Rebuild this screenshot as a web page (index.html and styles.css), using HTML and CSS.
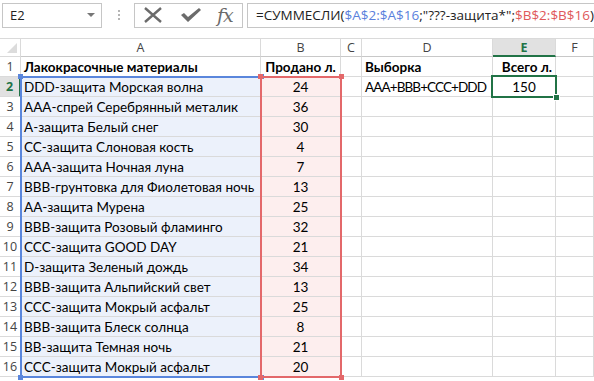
FILE: index.html
```html
<!DOCTYPE html>
<html lang="ru">
<head>
  <meta charset="UTF-8">
  <meta name="viewport" content="width=device-width, initial-scale=1.0">
  <title>СУММЕСЛИ</title>
  <link rel="stylesheet" href="styles.css">
</head>
<body>

<!-- Formula bar -->
<div class="toolbar">
  <div class="name-box">
    <span>E2</span>
    <span class="caret"></span>
  </div>
  <div class="grip"><i></i><i></i><i></i></div>
  <div class="fx-buttons">
    <svg class="btn-icon" width="20" height="16" viewBox="0 0 20 16">
      <path d="M2 1 L18 15 M18 1 L2 15" stroke="#6b6b6b" stroke-width="2.4" fill="none"/>
    </svg>
    <svg class="btn-icon" width="22" height="16" viewBox="0 0 22 16">
      <path d="M1 8 L4 6 L8 10 L19 1 L21 3 L8 15 Z" fill="#6b6b6b"/>
    </svg>
    <span class="fx">fx</span>
  </div>
  <div class="formula">=СУММЕСЛИ(<span class="ref-blue">$A$2:$A$16</span>;"???-защита*";<span class="ref-red">$B$2:$B$16</span>)</div>
</div>

<!-- Sheet -->
<div class="sheet">
  <div class="corner"><span class="tri"></span></div>
  <div class="col-head">A</div>
  <div class="col-head">B</div>
  <div class="col-head">C</div>
  <div class="col-head">D</div>
  <div class="col-head active">E</div>
  <div class="col-head">F</div>

  <div class="row-head">1</div>
  <div class="cell bold">Лакокрасочные материалы</div>
  <div class="cell bold center">Продано л.</div>
  <div class="cell"></div>
  <div class="cell bold">Выборка</div>
  <div class="cell bold right">Всего л.</div>
  <div class="cell"></div>

  <div class="row-head active">2</div>
  <div class="cell blue">DDD-защита Морская волна</div>
  <div class="cell red center">24</div>
  <div class="cell"></div>
  <div class="cell tight">AAA+BBB+CCC+DDD</div>
  <div class="cell center">150</div>
  <div class="cell"></div>

  <div class="row-head">3</div>
  <div class="cell blue">AAA-спрей Серебрянный металик</div>
  <div class="cell red center">36</div>
  <div class="cell"></div><div class="cell"></div><div class="cell"></div><div class="cell"></div>

  <div class="row-head">4</div>
  <div class="cell blue">A-защита Белый снег</div>
  <div class="cell red center">30</div>
  <div class="cell"></div><div class="cell"></div><div class="cell"></div><div class="cell"></div>

  <div class="row-head">5</div>
  <div class="cell blue">CC-защита Слоновая кость</div>
  <div class="cell red center">4</div>
  <div class="cell"></div><div class="cell"></div><div class="cell"></div><div class="cell"></div>

  <div class="row-head">6</div>
  <div class="cell blue">AAA-защита Ночная луна</div>
  <div class="cell red center">7</div>
  <div class="cell"></div><div class="cell"></div><div class="cell"></div><div class="cell"></div>

  <div class="row-head">7</div>
  <div class="cell blue">BBB-грунтовка для Фиолетовая ночь</div>
  <div class="cell red center">13</div>
  <div class="cell"></div><div class="cell"></div><div class="cell"></div><div class="cell"></div>

  <div class="row-head">8</div>
  <div class="cell blue">AA-защита Мурена</div>
  <div class="cell red center">25</div>
  <div class="cell"></div><div class="cell"></div><div class="cell"></div><div class="cell"></div>

  <div class="row-head">9</div>
  <div class="cell blue">BBB-защита Розовый фламинго</div>
  <div class="cell red center">32</div>
  <div class="cell"></div><div class="cell"></div><div class="cell"></div><div class="cell"></div>

  <div class="row-head">10</div>
  <div class="cell blue">CCC-защита GOOD DAY</div>
  <div class="cell red center">21</div>
  <div class="cell"></div><div class="cell"></div><div class="cell"></div><div class="cell"></div>

  <div class="row-head">11</div>
  <div class="cell blue">D-защита Зеленый дождь</div>
  <div class="cell red center">34</div>
  <div class="cell"></div><div class="cell"></div><div class="cell"></div><div class="cell"></div>

  <div class="row-head">12</div>
  <div class="cell blue">BBB-защита Альпийский свет</div>
  <div class="cell red center">13</div>
  <div class="cell"></div><div class="cell"></div><div class="cell"></div><div class="cell"></div>

  <div class="row-head">13</div>
  <div class="cell blue">CCC-защита Мокрый асфальт</div>
  <div class="cell red center">25</div>
  <div class="cell"></div><div class="cell"></div><div class="cell"></div><div class="cell"></div>

  <div class="row-head">14</div>
  <div class="cell blue">BBB-защита Блеск солнца</div>
  <div class="cell red center">8</div>
  <div class="cell"></div><div class="cell"></div><div class="cell"></div><div class="cell"></div>

  <div class="row-head">15</div>
  <div class="cell blue">BB-защита Темная ночь</div>
  <div class="cell red center">21</div>
  <div class="cell"></div><div class="cell"></div><div class="cell"></div><div class="cell"></div>

  <div class="row-head">16</div>
  <div class="cell blue">CCC-защита Мокрый асфальт</div>
  <div class="cell red center">20</div>
  <div class="cell"></div><div class="cell"></div><div class="cell"></div><div class="cell"></div>

  <!-- Range highlights drawn over the grid -->
  <div class="range range-blue">
    <span class="handle tl"></span><span class="handle tr"></span>
    <span class="handle bl"></span><span class="handle br"></span>
  </div>
  <div class="range range-red">
    <span class="handle tl"></span><span class="handle tr"></span>
    <span class="handle bl"></span><span class="handle br"></span>
  </div>
  <div class="active-cell"><span class="fill-handle"></span></div>
</div>

</body>
</html>
```

FILE: styles.css
```css
body {
  margin: 0;
  background-color: #fff;
  font-family: Lato, "Liberation Sans", sans-serif;
  overflow: hidden;
}

/* ---------- formula bar ---------- */

.toolbar {
  display: flex;
  align-items: center;
  height: 30px;
  padding: 0 0 0 2px;
  margin-bottom: 8px;
}

.name-box {
  display: flex;
  align-items: center;
  justify-content: space-between;
  width: 100px;
  height: 25px;
  box-sizing: border-box;
  border: 1px solid #c6c6c6;
  padding: 0 4px 0 7px;
  font-family: "Open Sans", "Liberation Sans", sans-serif;
  font-size: 13px;
  color: #222;
}

.caret {
  width: 0;
  height: 0;
  border-left: 4px solid transparent;
  border-right: 4px solid transparent;
  border-top: 4px solid #777;
  margin-right: 2px;
}

.grip {
  display: flex;
  flex-direction: column;
  gap: 2px;
  margin: 0 14px 0 16px;
}

.grip i {
  display: block;
  width: 2px;
  height: 2px;
  background-color: #b5b5b5;
}

.fx-buttons {
  display: flex;
  align-items: center;
  width: 109px;
  height: 25px;
  box-sizing: border-box;
  border: 1px solid #c6c6c6;
  padding: 0 0 0 8px;
}

.btn-icon {
  margin-right: 17px;
}

.fx {
  font-family: "DejaVu Serif", "Liberation Serif", serif;
  font-style: italic;
  font-size: 19px;
  color: #6b6b6b;
  margin-left: -2px;
  letter-spacing: -1px;
}

.formula {
  flex: 1;
  height: 25px;
  box-sizing: border-box;
  border: 1px solid #c6c6c6;
  border-right: none;
  margin-left: 4px;
  padding: 0 0 0 8px;
  font-family: "Open Sans", "Liberation Sans", sans-serif;
  font-size: 13.5px;
  line-height: 23px;
  color: #222;
  white-space: nowrap;
  overflow: hidden;
}

.ref-blue {
  color: #5a7fdc;
}

.ref-red {
  color: #e0585a;
}

/* ---------- sheet grid ---------- */

.sheet {
  position: relative;
  display: grid;
  grid-template-columns: 21px 240px 80px 21px 131px 63px 1fr;
  grid-template-rows: 19px repeat(16, 20px) 20px;
}

.corner,
.col-head,
.row-head,
.cell {
  box-sizing: border-box;
  border-right: 1px solid #dadada;
  border-bottom: 1px solid #dadada;
  white-space: nowrap;
  overflow: hidden;
}

.corner {
  position: relative;
  border-top: 1px solid #dadada;
}

.tri {
  position: absolute;
  right: 3px;
  bottom: 3px;
  width: 0;
  height: 0;
  border-left: 10px solid transparent;
  border-bottom: 10px solid #dcdcdc;
}

.col-head {
  border-top: 1px solid #dadada;
  border-bottom-color: #c8c8c8;
  font-family: "Open Sans", "Liberation Sans", sans-serif;
  font-size: 12.5px;
  color: #444;
  text-align: center;
  line-height: 17px;
}

.col-head.active {
  background-color: #e1e1e1;
  color: #217346;
  font-weight: bold;
  border-bottom: 2px solid #217346;
}

.row-head {
  font-family: "Open Sans", "Liberation Sans", sans-serif;
  font-size: 12.5px;
  color: #444;
  text-align: center;
  line-height: 19px;
}

.row-head.active {
  background-color: #e1e1e1;
  color: #217346;
  font-weight: bold;
  border-right: 2px solid #217346;
}

.cell {
  font-size: 13.5px;
  color: #000;
  padding: 0 3px;
  line-height: 20px;
}

.cell.tight {
  letter-spacing: -0.9px;
}

.bold {
  font-weight: bold;
}

.center {
  text-align: center;
}

.right {
  text-align: right;
}

.blue {
  background-color: #ecf1fb;
}

.red {
  background-color: #fdeeee;
}

/* ---------- highlights over the grid ---------- */

.range {
  position: absolute;
  top: -1px;
  left: -1px;
  right: -1px;
  bottom: -1px;
  border: 2px solid;
  pointer-events: none;
}

.range-blue {
  grid-column: 2 / 3;
  grid-row: 3 / 18;
  border-color: #5a86dc;
}

.range-red {
  grid-column: 3 / 4;
  grid-row: 3 / 18;
  border-color: #e3686a;
}

.handle {
  position: absolute;
  width: 5px;
  height: 5px;
}

.range-blue .handle {
  background-color: #5a86dc;
}

.range-red .handle {
  background-color: #e3686a;
}

.handle.tl { top: -4px; left: -4px; }
.handle.tr { top: -4px; right: -4px; }
.handle.bl { bottom: -4px; left: -4px; }
.handle.br { bottom: -4px; right: -4px; }

.active-cell {
  position: absolute;
  grid-column: 6 / 7;
  grid-row: 3 / 4;
  top: -2px;
  left: -2px;
  right: -1px;
  bottom: -1px;
  border: 2px solid #217346;
}

.fill-handle {
  position: absolute;
  right: -5px;
  bottom: -5px;
  width: 5px;
  height: 5px;
  background-color: #217346;
  border: 1px solid #fff;
}
```
